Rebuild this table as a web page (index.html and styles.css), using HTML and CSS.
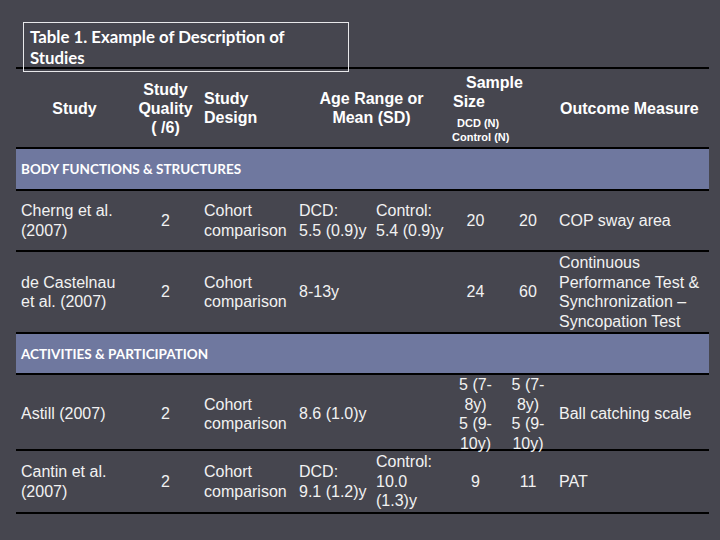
FILE: index.html
```html
<!DOCTYPE html>
<html>
<head>
<meta charset="utf-8">
<link rel="stylesheet" href="styles.css">
</head>
<body>
<div class="page">
  <div class="title">Table 1. Example of Description of<br>Studies</div>
  <div class="table">
    <div class="row head">
      <div class="c center">Study</div>
      <div class="c center">Study<br>Quality<br>( /6)</div>
      <div class="c pad6">Study<br>Design</div>
      <div class="c center span2">Age Range or<br>Mean (SD)</div>
      <div class="c sample span2">
        <span class="l-sample">Sample</span>
        <span class="l-size">Size</span>
        <span class="l-small l-dcd">DCD (N)</span>
        <span class="l-small l-ctl">Control (N)</span>
      </div>
      <div class="c pad6">Outcome Measure</div>
    </div>

    <div class="bar bar1">BODY FUNCTIONS &amp; STRUCTURES</div>

    <div class="row r1">
      <div class="c pad5">Cherng et al.<br>(2007)</div>
      <div class="c center">2</div>
      <div class="c pad6">Cohort<br>comparison</div>
      <div class="c pad5">DCD:<br>5.5 (0.9)y</div>
      <div class="c pad5">Control:<br>5.4 (0.9)y</div>
      <div class="c center">20</div>
      <div class="c center">20</div>
      <div class="c pad5">COP sway area</div>
    </div>

    <div class="row r2">
      <div class="c pad5">de Castelnau<br>et al. (2007)</div>
      <div class="c center">2</div>
      <div class="c pad6">Cohort<br>comparison</div>
      <div class="c pad5">8-13y</div>
      <div class="c pad5"></div>
      <div class="c center">24</div>
      <div class="c center">60</div>
      <div class="c pad5">Continuous Performance Test &amp; Synchronization – Syncopation Test</div>
    </div>

    <div class="bar bar2">ACTIVITIES &amp; PARTICIPATION</div>

    <div class="row r3">
      <div class="c pad5">Astill (2007)</div>
      <div class="c center">2</div>
      <div class="c pad6">Cohort<br>comparison</div>
      <div class="c pad5">8.6 (1.0)y</div>
      <div class="c pad5"></div>
      <div class="c center">5 (7-<br>8y)<br>5 (9-<br>10y)</div>
      <div class="c center">5 (7-<br>8y)<br>5 (9-<br>10y)</div>
      <div class="c pad5">Ball catching scale</div>
    </div>

    <div class="row r4">
      <div class="c pad5">Cantin et al.<br>(2007)</div>
      <div class="c center">2</div>
      <div class="c pad6">Cohort<br>comparison</div>
      <div class="c pad5">DCD:<br>9.1 (1.2)y</div>
      <div class="c pad5">Control:<br>10.0<br>(1.3)y</div>
      <div class="c center">9</div>
      <div class="c center">11</div>
      <div class="c pad5">PAT</div>
    </div>
  </div>
</div>
</body>
</html>
```

FILE: styles.css
```css
html, body {
  margin: 0;
  padding: 0;
  background: #46464f;
}
body {
  width: 720px;
  height: 540px;
  overflow: hidden;
  font-family: "Liberation Sans", Arial, sans-serif;
  color: #f2f2f2;
}
.page {
  padding: 22px 0 0 16px;
}
.title {
  position: relative;
  z-index: 1;
  margin-left: 7px;
  width: 326px;
  height: 50px;
  box-sizing: border-box;
  border: 1px solid #e8e8ea;
  padding: 3px 0 0 6px;
  font-family: Lato, "Open Sans", sans-serif;
  font-weight: 700;
  font-size: 16.8px;
  line-height: 21px;
  color: #ffffff;
}
.table {
  width: 693px;
  margin-top: -5px;
  border-top: 2px solid #000;
}
.row {
  display: grid;
  grid-template-columns: 117px 65px 96px 77px 78px 53px 52px 155px;
  align-items: center;
  box-sizing: border-box;
  border-bottom: 2px solid #000;
  font-size: 16px;
  line-height: 19.5px;
}
.head { height: 80px; font-weight: 700; color: #fff; line-height: 19px; }
.r1 { height: 61px; }
.r2 { height: 82px; }
.r3 { height: 76px; }
.r4 { height: 63px; }
.c { white-space: nowrap; }
.r2 .c:last-child { white-space: normal; }
.center { text-align: center; }
.pad5 { padding-left: 5px; }
.pad6 { padding-left: 6px; }
.span2 { grid-column: span 2; }
.sample {
  align-self: start;
  padding-top: 4px;
  display: flex;
  flex-direction: column;
  align-items: flex-start;
}
.l-sample { margin-left: 17px; }
.l-size { margin-left: 4px; }
.l-small {
  font-size: 11px;
  line-height: 14px;
}
.l-dcd { margin-left: 8px; margin-top: 5px; }
.l-ctl { margin-left: 3px; }
.bar {
  background: #6f789f;
  box-sizing: border-box;
  border-bottom: 2px solid #000;
  padding-left: 5px;
  display: flex;
  align-items: center;
  font-family: Lato, "Open Sans", sans-serif;
  font-weight: 700;
  font-size: 13.5px;
  color: #fff;
}
.bar1 { height: 42px; }
.bar2 { height: 41px; }
```
